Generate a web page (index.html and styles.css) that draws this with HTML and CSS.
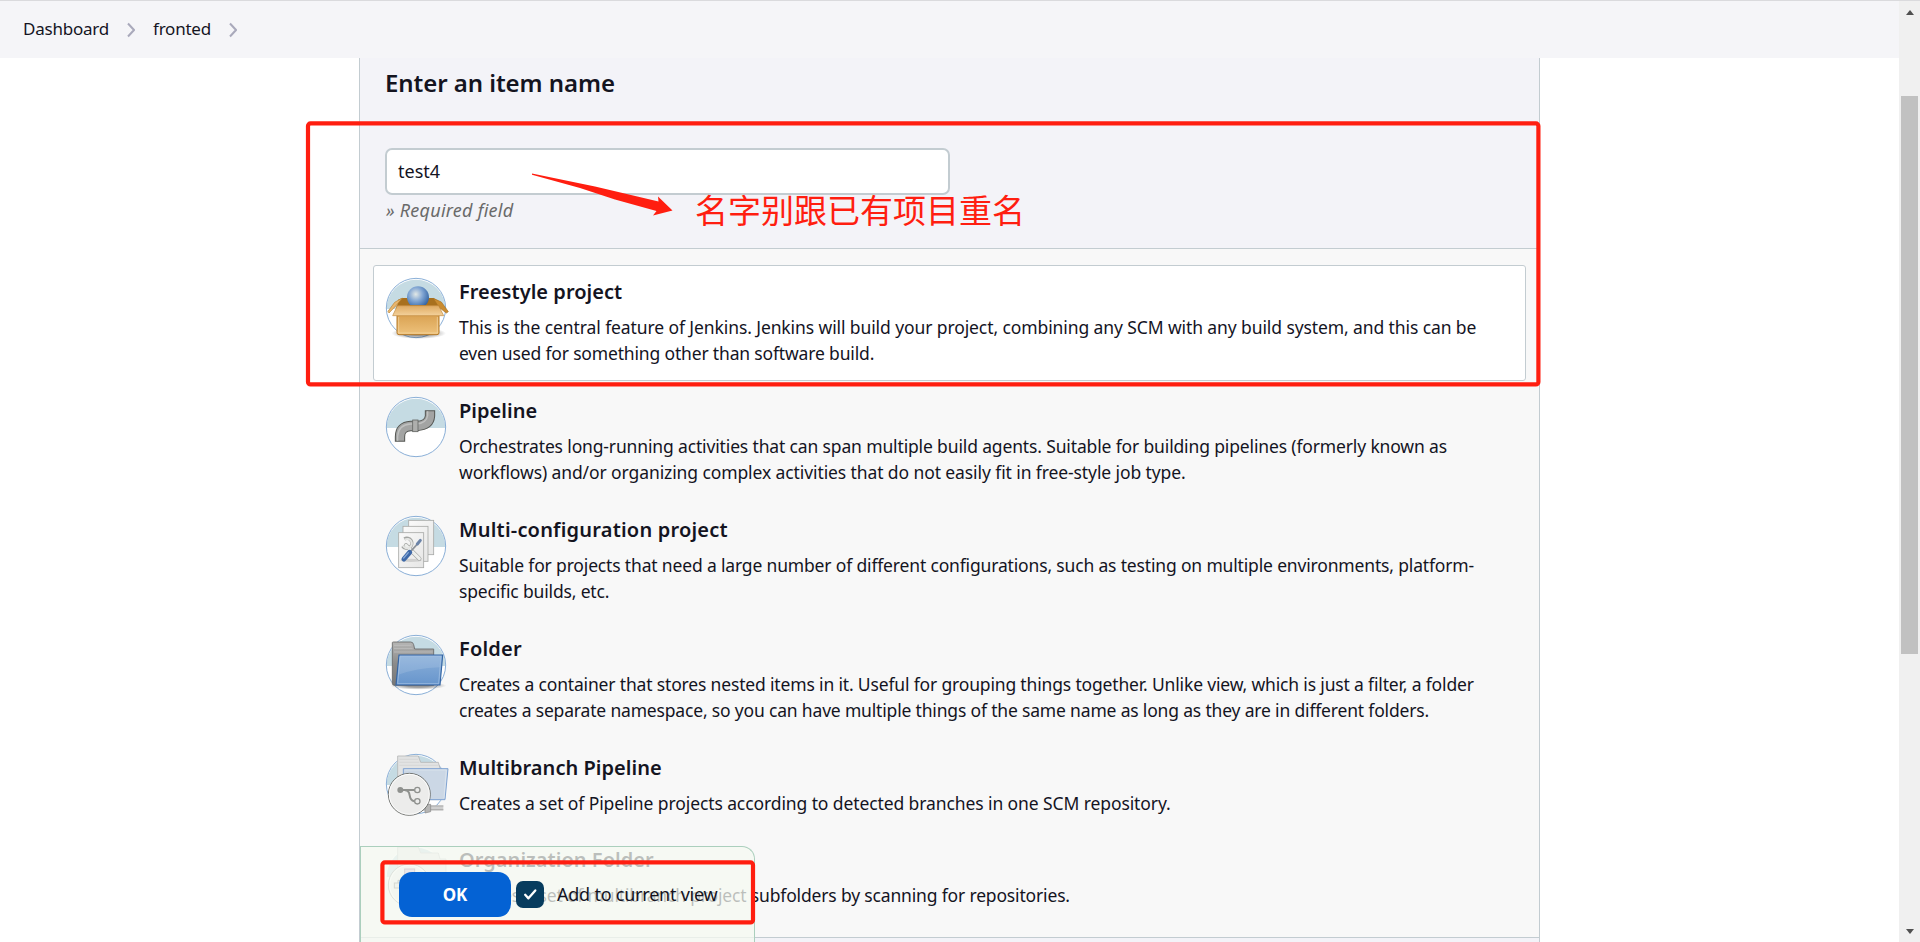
FILE: index.html
```html
<!DOCTYPE html>
<html lang="en">
<head>
<meta charset="utf-8">
<title>New Item [Jenkins]</title>
<link rel="stylesheet" href="styles.css">
</head>
<body>
<div class="window">
  <div class="page">
    <nav class="breadcrumbs">
      <span class="crumb crumb-home">Dashboard</span>
      <svg class="chevron" viewBox="0 0 8 16"><path d="M1 1.5 7 8 1 14.5"/></svg>
      <span class="crumb crumb-view">fronted</span>
      <svg class="chevron" viewBox="0 0 8 16"><path d="M1 1.5 7 8 1 14.5"/></svg>
    </nav>

    <main class="panel">
      <header class="panel-head">
        <h1 class="heading">Enter an item name</h1>
        <div class="name-field">test4</div>
        <p class="hint">» Required field</p>
      </header>

      <ul class="items">
        <li class="item selected">
          <svg class="item-icon" viewBox="42 47 204 204">
            <defs>
              <linearGradient id="box" x1="0" y1="0" x2="0" y2="1"><stop offset="0" stop-color="#d0933f"/><stop offset="1" stop-color="#eec27c"/></linearGradient>
              <linearGradient id="flap" x1="0" y1="0" x2="0" y2="1"><stop offset="0" stop-color="#dfaa62"/><stop offset="1" stop-color="#f3d19b"/></linearGradient>
              <radialGradient id="ball" cx=".4" cy=".36" r=".65"><stop offset="0" stop-color="#e2e8e6"/><stop offset=".5" stop-color="#7fa4d2"/><stop offset="1" stop-color="#3465a4"/></radialGradient>
              <radialGradient id="shade"><stop offset=".4" stop-color="#000" stop-opacity=".4"/><stop offset="1" stop-color="#000" stop-opacity="0"/></radialGradient>
            </defs>
            <circle class="disc" cx="138" cy="143" r="89"/><path class="sky" d="M50 146a88 88 0 0 1 176 0z"/><circle class="ring" cx="138" cy="143" r="89"/>
            <ellipse cx="146" cy="219" rx="82" ry="17" fill="url(#shade)"/>
            <path d="M84 118 97 113H190L206 123V146H80z" fill="#a8701e"/>
            <path d="M97 113 78 136 57 158 54 153 74 126z" fill="#e9b66d" stroke="#b98232" stroke-width="2"/>
            <path d="M190 114 214 125 235 154 229 158 206 140z" fill="#c98b30" stroke="#a8701e" stroke-width="2"/>
            <circle cx="144" cy="111" r="33" fill="url(#ball)"/>
            <path d="M81 136H207V217Q207 223 201 223H87Q81 223 81 217z" fill="url(#box)" stroke="#b57a28" stroke-width="3"/>
            <path d="M82 136H206L221 166H68z" fill="url(#flap)" stroke="#c08a3e" stroke-width="2"/>
            <path d="M86 170V218H202V170" fill="none" stroke="#f6d9a8" stroke-width="2"/>
          </svg>
          <div class="item-text">
            <h2 class="item-title">Freestyle project</h2>
            <p class="item-desc fit-a">This is the central feature of Jenkins. Jenkins will build your project, combining any SCM with any build system, and this can be<br><span class="fit-c">even used for something other than software build.</span></p>
          </div>
        </li>
        <li class="item">
          <svg class="item-icon" viewBox="42 45 204 204">
            <circle class="disc" cx="138" cy="141" r="89"/><path class="sky" d="M50 144a88 88 0 0 1 176 0z"/><circle class="ring" cx="138" cy="141" r="89"/>
            <path d="M90 185V170Q90 140 122 138H140Q178 136 180 108V91" fill="none" stroke="#555753" stroke-width="31"/>
            <path d="M90 182V170Q90 140 122 138H140Q178 136 180 108V94" fill="none" stroke="#a3a4a3" stroke-width="25"/>
            <path d="M83 182V168Q86 134 122 132H138Q170 130 173 106V94" fill="none" stroke="#c0c1c0" stroke-width="4"/>
            <rect x="128" y="120" width="16" height="35" fill="#aeafad" stroke="#666865" stroke-width="2.5"/>
          </svg>
          <div class="item-text">
            <h2 class="item-title">Pipeline</h2>
            <p class="item-desc fit-b">Orchestrates long-running activities that can span multiple build agents. Suitable for building pipelines (formerly known as<br><span class="fit-a">workflows) and/or organizing complex activities that do not easily fit in free-style job type.</span></p>
          </div>
        </li>
        <li class="item">
          <svg class="item-icon" viewBox="42 42 204 204">
            <defs><linearGradient id="paper" x1="0" y1="0" x2="1" y2="1"><stop offset="0" stop-color="#fafafa"/><stop offset="1" stop-color="#e6e6e5"/></linearGradient></defs>
            <circle class="disc" cx="138" cy="138" r="89"/><path class="sky" d="M50 141a88 88 0 0 1 176 0z"/><circle class="ring" cx="138" cy="138" r="89"/>
            <g fill="url(#paper)" stroke="#a9aaa8" stroke-width="2.5">
              <rect x="116" y="61" width="75" height="103"/><rect x="99" y="79" width="75" height="105"/><rect x="86" y="98" width="75" height="105"/>
            </g>
            <ellipse cx="123" cy="181" rx="32" ry="5" fill="#d0d0cf"/>
            <path d="M108 136 148 176" stroke="#a3a5a2" stroke-width="13" stroke-linecap="round"/>
            <path d="M103 117A15 15 0 1 1 98 138" fill="none" stroke="#a3a5a2" stroke-width="10"/>
            <path d="M108 136 148 176" stroke="#eceeec" stroke-width="9" stroke-linecap="round"/>
            <path d="M104 119A14 14 0 1 1 99 137" fill="none" stroke="#e4e5e3" stroke-width="6"/>
            <path d="M122 154 144 130" stroke="#8d9298" stroke-width="5"/>
            <path d="M142 132 151 121" stroke="#6c84a8" stroke-width="9" stroke-linecap="round"/>
            <path d="M102 177 119 157" stroke="#3e69a8" stroke-width="15" stroke-linecap="round"/>
            <path d="M101 174 115 158" stroke="#85a7d6" stroke-width="4" stroke-linecap="round"/>
          </svg>
          <div class="item-text">
            <h2 class="item-title title-wide">Multi-configuration project</h2>
            <p class="item-desc fit-c">Suitable for projects that need a large number of different configurations, such as testing on multiple environments, platform-<br>specific builds, etc.</p>
          </div>
        </li>
        <li class="item">
          <svg class="item-icon" viewBox="42 39 204 204">
            <defs>
              <linearGradient id="tab" x1="0" y1="0" x2="0" y2="1"><stop offset="0" stop-color="#b5b5b4"/><stop offset=".5" stop-color="#8b8b8a"/><stop offset="1" stop-color="#777"/></linearGradient>
              <linearGradient id="front" x1="0" y1="0" x2="0" y2="1"><stop offset="0" stop-color="#8bb0da"/><stop offset="1" stop-color="#6795cc"/></linearGradient>
            </defs>
            <circle class="disc" cx="138" cy="135" r="89"/><path class="sky" d="M50 138a88 88 0 0 1 176 0z"/><circle class="ring" cx="138" cy="135" r="89"/>
            <ellipse cx="145" cy="197" rx="84" ry="12" fill="url(#shade)"/>
            <path d="M67 68Q67 66 70 66H122Q129 66 131 74L134 87H191V196H73Q67 196 67 190z" fill="url(#tab)" stroke="#666" stroke-width="2.5"/>
            <path d="M72 76H124M72 86H128M72 96H188" stroke="#c6c6c5" stroke-width="2"/>
            <path d="M87 105H218L210 195H78z" fill="url(#front)" stroke="#3465a4" stroke-width="3.5"/>
            <path d="M90 109H213L206 191H83z" fill="none" stroke="#a9c5e6" stroke-width="2"/>
            <path d="M89 110H212L209 142Q140 145 85 164z" fill="#fff" opacity=".12"/>
          </svg>
          <div class="item-text">
            <h2 class="item-title title-wide">Folder</h2>
            <p class="item-desc fit-c">Creates a container that stores nested items in it. Useful for grouping things together. Unlike view, which is just a filter, a folder<br><span class="fit-d">creates a separate namespace, so you can have multiple things of the same name as long as they are in different folders.</span></p>
          </div>
        </li>
        <li class="item item-short">
          <svg class="item-icon" viewBox="42 33 204 204">
            <circle class="disc" cx="138" cy="129" r="89"/><path class="sky" d="M50 132a88 88 0 0 1 176 0z"/><circle class="ring" cx="138" cy="129" r="89"/>
            <path d="M150 193H220V209H150z" fill="#cfcfcf"/><path d="M150 195H220M150 206H220" stroke="#aaa" stroke-width="3"/><path d="M165 190H182V212L165 216z" fill="#b5b5b4" stroke="#888" stroke-width="2"/>
            <path d="M83 45H145L152 64H205L210 82V176H83z" fill="#e2e3e3" stroke="#b5b6b6" stroke-width="2.5"/>
            <path d="M88 55H144M88 64H148M88 73H204" stroke="#d0d1d1" stroke-width="2"/>
            <path d="M100 83H234L225 176H100z" fill="#cbd7e5" stroke="#7fa3d2" stroke-width="3"/>
            <path d="M104 87H229L222 172" fill="none" stroke="#e3eaf2" stroke-width="2"/>
            <circle cx="118" cy="160" r="63" fill="#ececeb" stroke="#5d5f5c" stroke-width="2.5"/><circle cx="118" cy="160" r="60" fill="none" stroke="#fff" stroke-width="2.5"/>
            <g stroke="#8f918e" fill="none" stroke-width="6"><path d="M91 147H134"/><path d="M105 148Q117 148 119 163T133 181"/></g>
            <circle cx="91" cy="147" r="9" fill="#8f918e"/><g fill="#ececeb" stroke="#8f918e" stroke-width="4"><circle cx="142" cy="147" r="8"/><circle cx="142" cy="181" r="8"/></g>
          </svg>
          <div class="item-text">
            <h2 class="item-title">Multibranch Pipeline</h2>
            <p class="item-desc fit-a">Creates a set of Pipeline projects according to detected branches in one SCM repository.</p>
          </div>
        </li>
        <li class="item">
          <svg class="item-icon" viewBox="42 33 204 204">
            <circle class="disc" cx="138" cy="129" r="89"/><path class="sky" d="M50 132a88 88 0 0 1 176 0z"/>
            <path d="M83 42H145L152 60H205L210 78H228V170H83z" fill="#e6e8e8" stroke="#c2c3c3" stroke-width="2.5"/>
            <circle cx="118" cy="156" r="63" fill="#ececeb" stroke="#8d8f8c" stroke-width="2.5"/><circle cx="118" cy="156" r="59" fill="none" stroke="#fff" stroke-width="3"/>
            <rect x="104" y="108" width="30" height="24" fill="#cdb6d8" stroke="#8b6b84" stroke-width="3"/><path d="M119 132V142M84 150V142H152V150" fill="none" stroke="#666" stroke-width="3"/><rect x="73" y="150" width="22" height="15" fill="#ddd" stroke="#777" stroke-width="3"/>
          </svg>
          <div class="item-text">
            <h2 class="item-title">Organization Folder</h2>
            <p class="item-desc fit-c">Creates a set of multibranch project subfolders by scanning for repositories.</p>
          </div>
        </li>
      </ul>
      <div class="panel-foot"></div>
    </main>

    <div class="action-bar">
      <button class="ok">OK</button>
      <span class="checkbox"><svg viewBox="0 0 28 28"><path d="M9 14.3 12.4 18 19.5 9.8"/></svg></span>
      <span class="view-label">Add to current view</span>
    </div>

    <svg class="marks" viewBox="0 0 1899 942">
      <rect x="308" y="123.4" width="1230.4" height="261" rx="2.5"/>
      <rect x="382.4" y="862.4" width="370.6" height="60" rx="2.5"/>
      <path d="M532 173.400 595 186.500 658.500 201.500 658 196.500 672.500 210.500 653 215.500 656.500 211 615 199.500 580 188 532 174.800z"/>
    </svg>
    <p class="note">名字别跟已有项目重名</p>
  </div>
  <div class="scrollbar"><i class="arrow up"></i><i class="thumb"></i><i class="arrow down"></i></div>
</div>
</body>
</html>
```
FILE: styles.css
```css
* { box-sizing: border-box; }
body { margin: 0; overflow: hidden; background: #fff; color: #14141f; font: 18px/26px "Noto Sans", "Open Sans", sans-serif; }
h1, h2, p, ul { margin: 0; padding: 0; }
.window { display: grid; grid-template-columns: 1fr 21px; height: 942px; border-top: 1px solid #dadadd; }
.page { overflow: hidden; }
.breadcrumbs { display: flex; align-items: center; height: 57px; padding-left: 23px; background: #f5f5f8; font-size: 17px; white-space: nowrap; }
.crumb { display: block; padding-bottom: 1px; letter-spacing: -.22px; }
.crumb-home { width: 86px; }
.crumb-view { width: 58px; }
.chevron { width: 8px; height: 16px; margin: 0 18px; fill: none; stroke: #a9a9bb; stroke-width: 2; }
.panel { width: 1181px; margin-left: 359px; border: solid #c3ccd1; border-width: 0 1px; background: #f8f8f8; white-space: nowrap; }
.panel-head { height: 191px; padding: 8px 26px 0 25px; background: #f3f3f8; border-bottom: 1px solid #c3ccd1; }
.heading { font-size: 24px; line-height: 34px; font-weight: 600; letter-spacing: -.06px; }
.name-field { width: 565px; height: 47px; margin-top: 48px; padding: 8px 11px 0; background: #fff; border: 2px solid #c3ccd1; border-radius: 7px; }
.hint { margin-top: 2px; padding-left: 1px; color: #6a6a6a; font-style: italic; letter-spacing: .25px; }
.items { list-style: none; padding: 16px 13px 0; }
.item { display: grid; grid-template-columns: 60px 1fr; column-gap: 13px; margin-bottom: 3px; padding: 12px 12px 14px; border: 1px solid transparent; border-radius: 3px; }
.item-short { margin-bottom: 2px; }
.selected { background: #fff; border-color: #c3ccd1; }
.item-icon { width: 68px; height: 68px; margin: -2px 0 -8px -2px; }
.disc { fill: #fff; }
.sky { fill: #c5dbe3; }
.ring { fill: none; stroke: #729fcf; stroke-width: 2.5; }
.item-title { margin-top: 1px; font-size: 20px; line-height: 26px; font-weight: 600; letter-spacing: .04px; }
.title-wide { letter-spacing: .2px; }
.item-desc { margin-top: 9px; line-height: 26px; font-size: 17.5px; }
.fit-a { letter-spacing: -.1px; }
.fit-b { letter-spacing: -.145px; }
.fit-c { letter-spacing: -.163px; }
.fit-d { letter-spacing: -.175px; }
.panel-foot { height: 40px; margin-top: 14px; background: #f3f3f8; border-top: 1px solid #c3ccd1; }
.action-bar { position: absolute; left: 360px; top: 846px; display: flex; align-items: flex-start; width: 395px; height: 96px; padding: 25px 0 0 38px; background: rgba(246, 249, 241, .74); border: 1px solid #abcfbd; border-bottom: 0; border-top-right-radius: 13px; white-space: nowrap; }
.ok { width: 112px; height: 45px; padding: 0; border: 0; border-radius: 13px; background: #0462d4; color: #fff; font: 700 17px/45px "Noto Sans", sans-serif; }
.checkbox { width: 28px; height: 27px; margin: 9px 0 0 5px; border-radius: 7px; background: #073c5e; }
.checkbox svg { display: block; width: 28px; height: 27px; fill: none; stroke: #fff; stroke-width: 2.4; stroke-linecap: round; stroke-linejoin: round; }
.view-label { margin: 9px 0 0 13px; letter-spacing: -.23px; }
.marks { position: absolute; left: 0; top: 0; width: 1899px; height: 942px; }
.marks rect { fill: none; stroke: #ff1e10; stroke-width: 4.2; }
.marks path { fill: #ff1e10; }
.note { position: absolute; left: 695px; top: 189px; color: #ff1e10; font: 400 33px/40px "Noto Sans CJK SC", sans-serif; white-space: nowrap; }
.scrollbar { display: flex; flex-direction: column; align-items: center; background: #f0f0f0; }
.arrow { border: 4.5px solid transparent; }
.up { border-top: 0; border-bottom: 5px solid #505050; margin-top: 9px; }
.thumb { width: 17px; height: 558px; margin-top: 81px; background: #c1c1c1; }
.down { border-bottom: 0; border-top: 5px solid #505050; margin: auto 0 8px; }
```
